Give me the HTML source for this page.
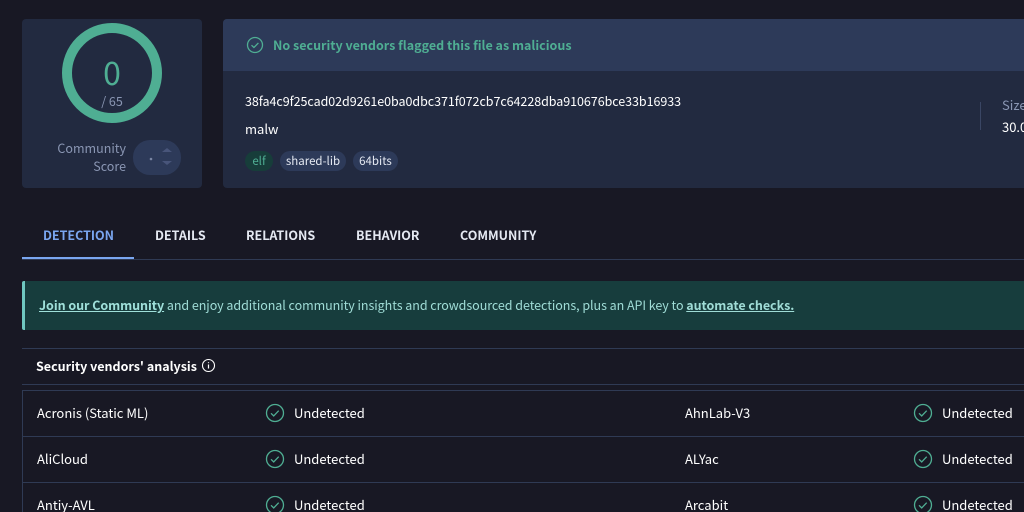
<!DOCTYPE html>
<html><head><style>
*{box-sizing:border-box;margin:0;padding:0}
html,body{width:1024px;height:512px;overflow:hidden}
body{background:#181824;font-family:"Noto Sans CJK JP","Liberation Sans",sans-serif;color:#fff;position:relative}
.abs{position:absolute;white-space:nowrap}
.tag{position:absolute;top:151px;height:20px;border-radius:10px;background:#2d3a59;color:#e5e9f2;font-size:11.5px;line-height:20px;text-align:center}
.tab{position:absolute;top:225px;font-size:12.5px;font-weight:bold;color:#e5e9f2}
.row{position:absolute;left:22px;width:1010px;height:46px;border-top:1px solid #2f3a54;border-left:1px solid #2f3a54;font-size:13px}
.row span{position:absolute;top:12px}
</style></head><body>
<div class="abs" style="left:22px;top:19px;width:180px;height:169px;background:#222a40;border-radius:4px"></div>
<svg class="abs" style="left:0;top:0" width="230" height="190">
<circle cx="112" cy="73" r="45" fill="none" stroke="#4fae93" stroke-width="10"/>
<rect x="133" y="140" width="48" height="35" rx="17" fill="#2d3a59"/>
<circle cx="151" cy="159" r="1.3" fill="#7a86a3"/>
<path d="M162 152l5-4 5 4z M162 161l5 4 5-4z" fill="#48557a"/>
</svg>
<div class="abs" style="left:62px;top:52px;width:100px;text-align:center;font-size:32px;line-height:40px;color:#4fae93">0</div>
<div class="abs" style="left:62px;top:91px;width:100px;text-align:center;font-size:12.5px;color:#8a96b3">/ 65</div>
<div class="abs" style="left:40px;top:139px;width:86px;text-align:right;font-size:12.5px;line-height:18px;color:#8a96b3">Community<br>Score</div>

<div class="abs" style="left:223px;top:19px;width:820px;height:169px;background:#222a40;border-radius:4px;overflow:hidden">
<div style="height:52px;background:#2d3a59"></div></div>
<svg class="abs" style="left:246px;top:36px" width="18" height="18"><circle cx="9" cy="9" r="7.5" fill="none" stroke="#4fae93" stroke-width="1.3"/><path d="M5.5 9.2l2.4 2.3 4.5-4.6" fill="none" stroke="#4fae93" stroke-width="1.3"/></svg>
<div class="abs" style="left:273px;top:35px;font-size:12.5px;font-weight:bold;color:#4fae93">No security vendors flagged this file as malicious</div>
<div class="abs" style="left:245px;top:91px;font-size:12.5px;letter-spacing:-0.05px;color:#fff">38fa4c9f25cad02d9261e0ba0dbc371f072cb7c64228dba910676bce33b16933</div>
<div class="abs" style="left:245px;top:119px;font-size:13px;color:#fff">malw</div>
<div class="tag" style="left:245px;width:28px;background:#173d3a;color:#4fae93">elf</div>
<div class="tag" style="left:280px;width:66px">shared-lib</div>
<div class="tag" style="left:353px;width:45px">64bits</div>
<div class="abs" style="left:980px;top:102px;width:1px;height:28px;background:#3a4664"></div>
<div class="abs" style="left:1002px;top:95px;font-size:13px;color:#8a96b3">Size</div>
<div class="abs" style="left:1002px;top:117px;font-size:13px;color:#fff">30.0</div>

<div class="tab" style="left:43px;color:#7aa6f0">DETECTION</div>
<div class="tab" style="left:155px">DETAILS</div>
<div class="tab" style="left:246px">RELATIONS</div>
<div class="tab" style="left:356px">BEHAVIOR</div>
<div class="tab" style="left:460px">COMMUNITY</div>
<div class="abs" style="left:22px;top:259px;width:1010px;height:1px;background:#2f3a54"></div>
<div class="abs" style="left:22px;top:257px;width:112px;height:2px;background:#7aa6f0"></div>

<div class="abs" style="left:22px;top:281px;width:1010px;height:49px;background:#173d3d;border-left:3px solid #6fc7c0;border-radius:2px"></div>
<div class="abs" style="left:39px;top:295px;font-size:12.5px;letter-spacing:-0.05px;color:#9fdcd6"><b style="color:#9fe0da;text-decoration:underline">Join our Community</b> and enjoy additional community insights and crowdsourced detections, plus an API key to <b style="text-decoration:underline">automate checks.</b></div>

<div class="abs" style="left:22px;top:348px;width:1010px;height:1px;background:#2f3a54"></div>
<div class="abs" style="left:36px;top:356px;font-size:12.5px;font-weight:bold">Security vendors' analysis</div>
<svg class="abs" style="left:201px;top:358px" width="15" height="15"><circle cx="7.5" cy="7.5" r="6" fill="none" stroke="#fff" stroke-width="1.1"/><path d="M7.5 6.5v4M7.5 4.3v.8" stroke="#fff" stroke-width="1.2"/></svg>
<div class="abs" style="left:22px;top:384px;width:1010px;height:1px;background:#2f3a54"></div>

<div class="row" style="top:390px"><span style="left:14px">Acronis (Static ML)</span><span style="left:271px">Undetected</span><span style="left:662px">AhnLab-V3</span><span style="left:919px">Undetected</span></div>
<div class="row" style="top:436px"><span style="left:14px">AliCloud</span><span style="left:271px">Undetected</span><span style="left:662px">ALYac</span><span style="left:919px">Undetected</span></div>
<div class="row" style="top:482px"><span style="left:14px">Antiy-AVL</span><span style="left:271px">Undetected</span><span style="left:662px">Arcabit</span><span style="left:919px">Undetected</span></div>
<svg class="abs" style="left:0;top:0" width="1024" height="512">
<g fill="none" stroke="#4fae93" stroke-width="1.3">
<circle cx="275" cy="413" r="8.5"/><circle cx="923" cy="413" r="8.5"/>
<circle cx="275" cy="459" r="8.5"/><circle cx="923" cy="459" r="8.5"/>
<circle cx="275" cy="505" r="8.5"/><circle cx="923" cy="505" r="8.5"/>
<path d="M271 413.3l2.7 2.6 5-5.2M919 413.3l2.7 2.6 5-5.2M271 459.3l2.7 2.6 5-5.2M919 459.3l2.7 2.6 5-5.2M271 505.3l2.7 2.6 5-5.2M919 505.3l2.7 2.6 5-5.2"/>
</g></svg>
</body></html>
